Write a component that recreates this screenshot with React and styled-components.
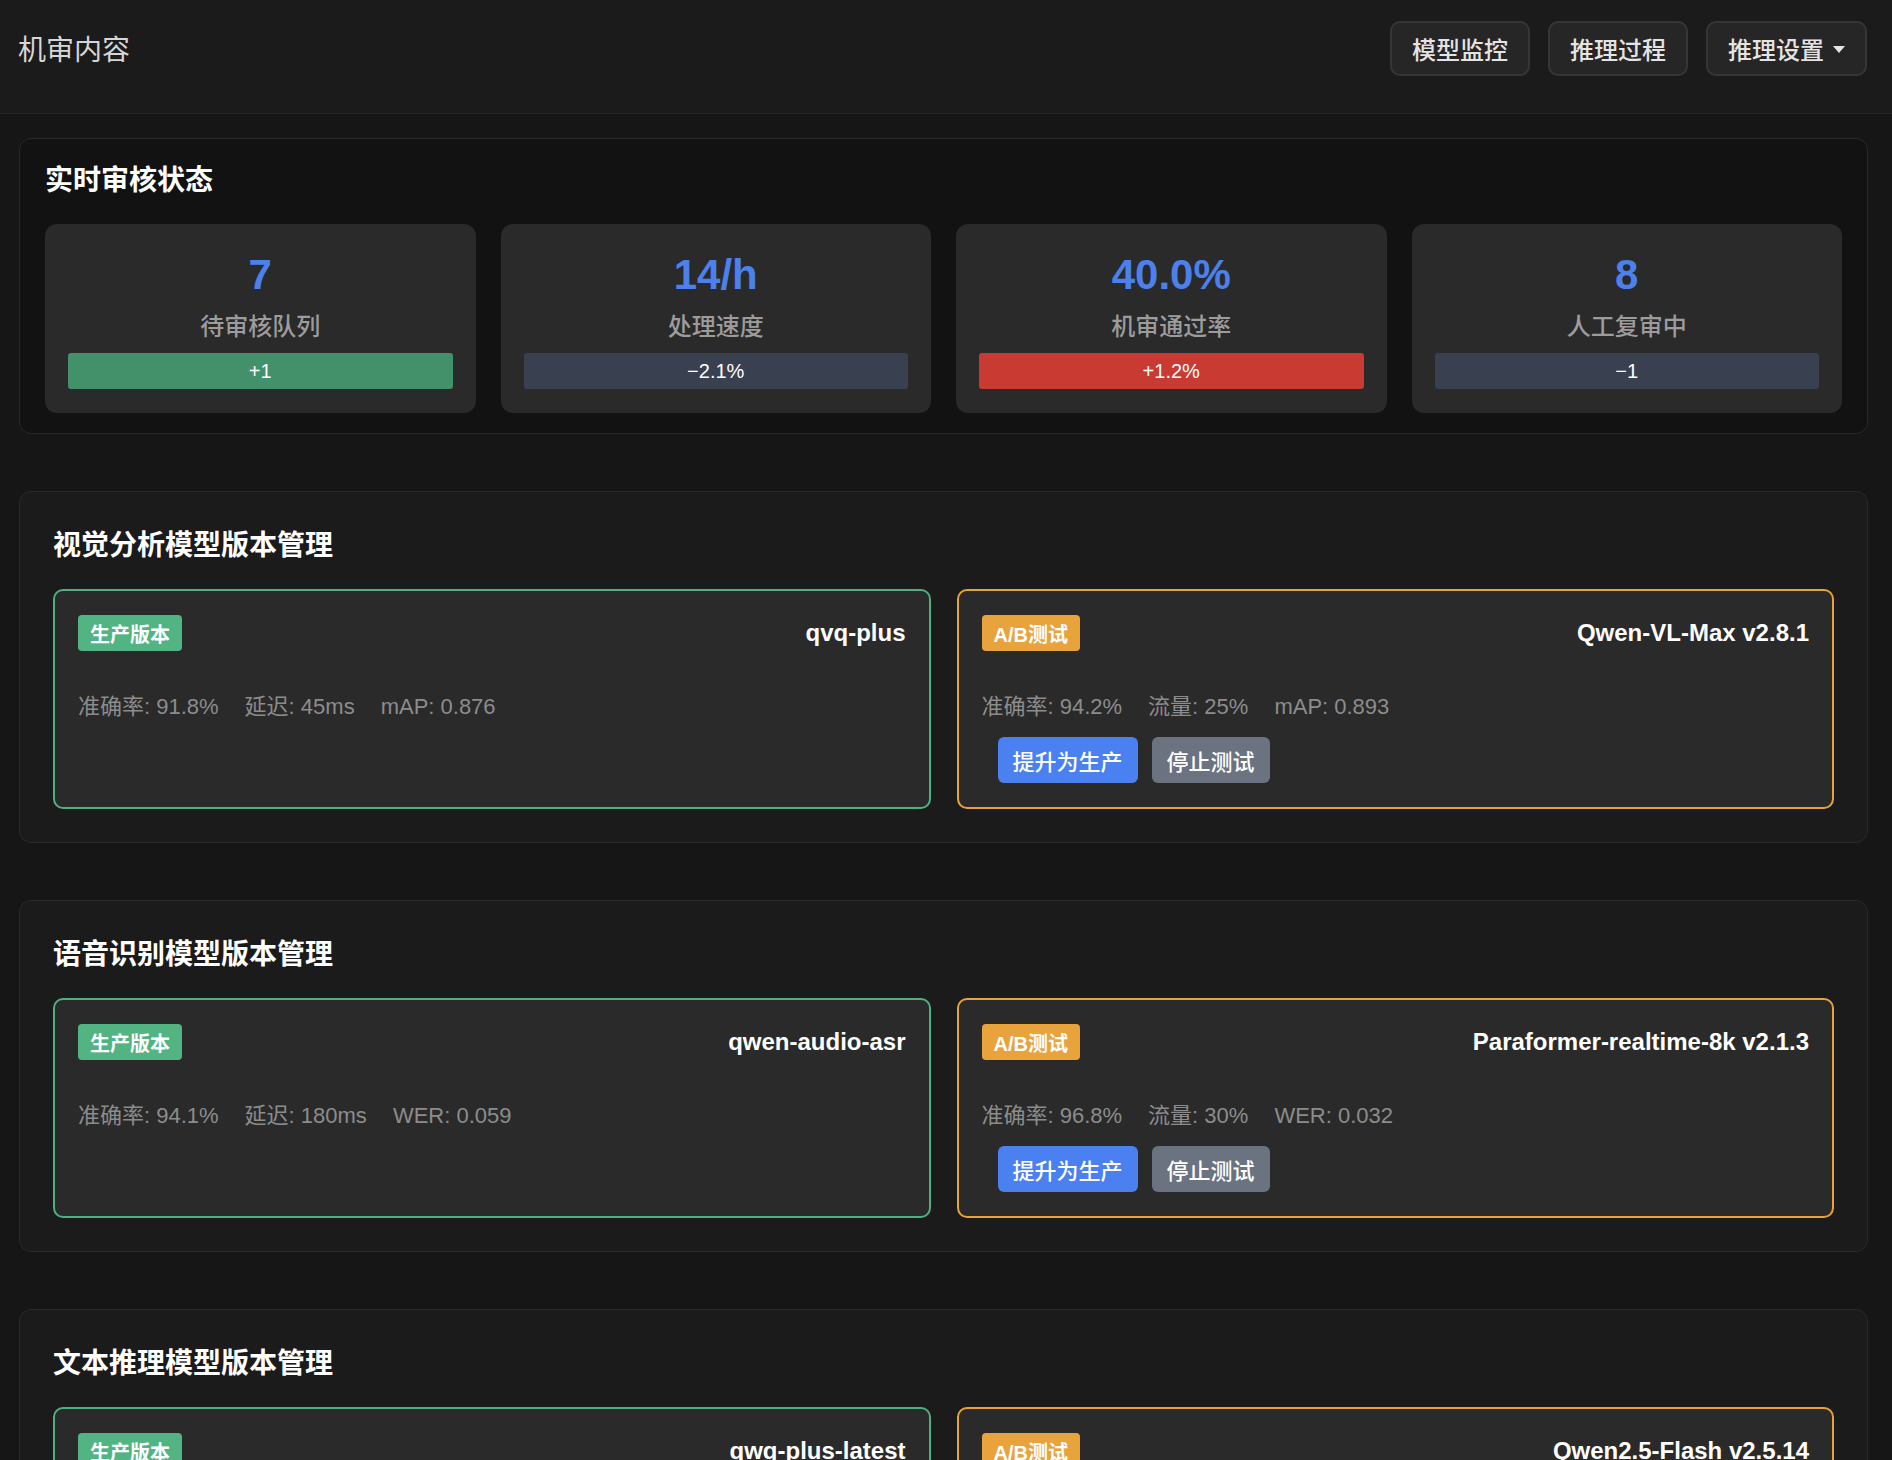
import React from "react";
import styled, { createGlobalStyle } from "styled-components";

const GlobalStyle = createGlobalStyle`
    html, body {
        margin: 0;
        padding: 0;
        background: #161616;
    }
    body {
        font-family: "Liberation Sans", "Noto Sans CJK SC", sans-serif;
        color: #e6e6e6;
    }
    * {
        box-sizing: border-box;
    }
`;

const Header = styled.header`
    display: flex;
    align-items: center;
    justify-content: space-between;
    padding: 20px 25px 37px 18px;
    background: #1b1b1b;
    border-bottom: 1px solid #262626;
`;

const PageTitle = styled.h1`
    margin: 3px 0 -3px 0;
    font-size: 28px;
    line-height: 56px;
    font-weight: 400;
    color: #d6d6d6;
`;

const Actions = styled.div`
    display: flex;
    gap: 18px;
`;

const HeaderButton = styled.button`
    display: flex;
    align-items: center;
    gap: 9px;
    height: 55px;
    padding: 0 20px;
    background: #262626;
    border: 2px solid #363636;
    border-radius: 10px;
    color: #e4e4e4;
    font-family: inherit;
    font-size: 24px;
    font-weight: 500;
    cursor: pointer;
`;

const Caret = styled.span`
    width: 0;
    height: 0;
    border-left: 6px solid transparent;
    border-right: 6px solid transparent;
    border-top: 7px solid #e4e4e4;
    margin-top: 2px;
`;

const Main = styled.main`
    padding: 24px 24px 40px 19px;
    display: flex;
    flex-direction: column;
    gap: 57px;
`;

const Panel = styled.section`
    background: ${(props) => (props.dark ? "#121212" : "#1b1b1b")};
    border: 1px solid #292929;
    border-radius: 12px;
    padding: ${(props) => (props.dark ? "25px 25px 20px 25px" : "37px 33px 33px 33px")};
`;

const PanelTitle = styled.h2`
    margin: 0 0 26px 0;
    font-size: 28px;
    line-height: 34px;
    font-weight: 700;
    color: #ffffff;
`;

const StatGrid = styled.div`
    display: grid;
    grid-template-columns: repeat(4, 1fr);
    gap: 25px;
`;

const StatCard = styled.div`
    background: #2a2a2a;
    border-radius: 12px;
    padding: 26px 23px 24px 23px;
    display: flex;
    flex-direction: column;
    align-items: center;
`;

const StatValue = styled.div`
    font-size: 42px;
    line-height: 50px;
    font-weight: 600;
    color: #4c80ea;
`;

const StatLabel = styled.div`
    margin-top: 11px;
    font-size: 24px;
    line-height: 32px;
    font-weight: 500;
    color: #9c9c9c;
`;

const barColors = {
    up: "#42916a",
    flat: "#394050",
    down: "#c83a32",
};

const StatBar = styled.div`
    margin-top: 10px;
    width: 100%;
    height: 36px;
    border-radius: 3px;
    background: ${(props) => barColors[props.tone]};
    color: #ffffff;
    font-size: 20px;
    display: flex;
    align-items: center;
    justify-content: center;
`;

const ModelGrid = styled.div`
    display: grid;
    grid-template-columns: 1fr 1fr;
    gap: 26px;
`;

const ModelCard = styled.div`
    background: #2a2a2a;
    border: 2px solid ${(props) => (props.ab ? "#e8a23a" : "#4fb07f")};
    border-radius: 10px;
    padding: 24px 23px 24px 23px;
`;

const CardTop = styled.div`
    display: flex;
    align-items: center;
    justify-content: space-between;
`;

const Badge = styled.span`
    display: inline-flex;
    align-items: center;
    height: 36px;
    padding: 0 12px;
    border-radius: 4px;
    background: ${(props) => (props.ab ? "#e8a33d" : "#52b383")};
    color: #ffffff;
    font-size: 20px;
    font-weight: 700;
`;

const ModelName = styled.span`
    font-size: 24px;
    color: #ffffff;
    font-weight: 600;
`;

const Metrics = styled.div`
    margin-top: 41px;
    display: flex;
    gap: 26px;
    font-size: 22px;
    line-height: 30px;
    color: #8c8c8c;
`;

const ButtonRow = styled.div`
    margin: 15px 0 0 16px;
    display: flex;
    gap: 14px;
`;

const ActionButton = styled.button`
    height: 46px;
    padding: 0 15px;
    border: none;
    border-radius: 6px;
    background: ${(props) => (props.primary ? "#4a80f0" : "#6b7280")};
    color: #ffffff;
    font-family: inherit;
    font-size: 22px;
    font-weight: 500;
    cursor: pointer;
`;

const stats = [
    { value: "7", label: "待审核队列", delta: "+1", tone: "up" },
    { value: "14/h", label: "处理速度", delta: "−2.1%", tone: "flat" },
    { value: "40.0%", label: "机审通过率", delta: "+1.2%", tone: "down" },
    { value: "8", label: "人工复审中", delta: "−1", tone: "flat" },
];

const sections = [
    {
        title: "视觉分析模型版本管理",
        prod: { name: "qvq-plus", metrics: ["准确率: 91.8%", "延迟: 45ms", "mAP: 0.876"] },
        ab: { name: "Qwen-VL-Max v2.8.1", metrics: ["准确率: 94.2%", "流量: 25%", "mAP: 0.893"] },
    },
    {
        title: "语音识别模型版本管理",
        prod: { name: "qwen-audio-asr", metrics: ["准确率: 94.1%", "延迟: 180ms", "WER: 0.059"] },
        ab: { name: "Paraformer-realtime-8k v2.1.3", metrics: ["准确率: 96.8%", "流量: 30%", "WER: 0.032"] },
    },
    {
        title: "文本推理模型版本管理",
        prod: { name: "qwq-plus-latest", metrics: ["准确率: 93.5%", "延迟: 320ms", "F1: 0.912"] },
        ab: { name: "Qwen2.5-Flash v2.5.14", metrics: ["准确率: 95.1%", "流量: 20%", "F1: 0.928"] },
    },
];

const App = () => {
    return (
        <>
            <GlobalStyle />
            <Header>
                <PageTitle>机审内容</PageTitle>
                <Actions>
                    <HeaderButton>模型监控</HeaderButton>
                    <HeaderButton>推理过程</HeaderButton>
                    <HeaderButton>
                        推理设置
                        <Caret />
                    </HeaderButton>
                </Actions>
            </Header>
            <Main>
                <Panel dark>
                    <PanelTitle>实时审核状态</PanelTitle>
                    <StatGrid>
                        {stats.map((s, i) => (
                            <StatCard key={i}>
                                <StatValue>{s.value}</StatValue>
                                <StatLabel>{s.label}</StatLabel>
                                <StatBar tone={s.tone}>{s.delta}</StatBar>
                            </StatCard>
                        ))}
                    </StatGrid>
                </Panel>

                {sections.map((sec, i) => (
                    <Panel key={i}>
                        <PanelTitle>{sec.title}</PanelTitle>
                        <ModelGrid>
                            <ModelCard>
                                <CardTop>
                                    <Badge>生产版本</Badge>
                                    <ModelName>{sec.prod.name}</ModelName>
                                </CardTop>
                                <Metrics>
                                    {sec.prod.metrics.map((m, j) => (
                                        <span key={j}>{m}</span>
                                    ))}
                                </Metrics>
                            </ModelCard>
                            <ModelCard ab>
                                <CardTop>
                                    <Badge ab>A/B测试</Badge>
                                    <ModelName>{sec.ab.name}</ModelName>
                                </CardTop>
                                <Metrics>
                                    {sec.ab.metrics.map((m, j) => (
                                        <span key={j}>{m}</span>
                                    ))}
                                </Metrics>
                                <ButtonRow>
                                    <ActionButton primary>提升为生产</ActionButton>
                                    <ActionButton>停止测试</ActionButton>
                                </ButtonRow>
                            </ModelCard>
                        </ModelGrid>
                    </Panel>
                ))}
            </Main>
        </>
    );
};

export default App;
